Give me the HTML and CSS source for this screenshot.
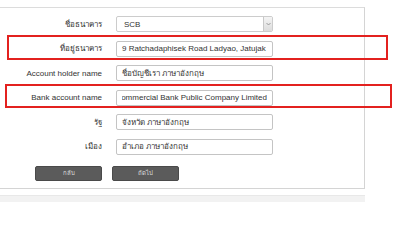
FILE: index.html
```html
<!DOCTYPE html>
<html lang="th">
<head>
<meta charset="utf-8">
<title>Bank form</title>
<link rel="stylesheet" href="styles.css">
</head>
<body>
<div class="panel">
  <div class="form">
    <div class="row">
      <div class="label">ชื่อธนาคาร</div>
      <div class="field select"><span class="val">SCB</span><span class="arrow"><svg width="5" height="4" viewBox="0 0 5 4"><path d="M0.5 1 L2.5 3 L4.5 1" fill="none" stroke="#888" stroke-width="0.8"/></svg></span></div>
    </div>
    <div class="row">
      <div class="label">ที่อยู่ธนาคาร</div>
      <div class="field"><span class="val">9 Ratchadaphisek Road Ladyao, Jatujak</span></div>
    </div>
    <div class="row">
      <div class="label">Account holder name</div>
      <div class="field"><span class="val">ชื่อบัญชีเรา ภาษาอังกฤษ</span></div>
    </div>
    <div class="row">
      <div class="label">Bank account name</div>
      <div class="field"><div class="clip"><span class="val">Commercial Bank Public Company Limited</span></div></div>
    </div>
    <div class="row">
      <div class="label">รัฐ</div>
      <div class="field"><span class="val">จังหวัด ภาษาอังกฤษ</span></div>
    </div>
    <div class="row">
      <div class="label">เมือง</div>
      <div class="field"><span class="val">อำเภอ ภาษาอังกฤษ</span></div>
    </div>
    <div class="buttons">
      <div class="btn">กลับ</div>
      <div class="btn">ถัดไป</div>
    </div>
  </div>
</div>
<div class="footer"></div>
<div class="mark mark1"></div>
<div class="mark mark2"></div>
</body>
</html>
```
FILE: styles.css
```css
html, body {
  margin: 0;
  padding: 0;
  background: #ffffff;
}
body {
  width: 400px;
  height: 202px;
  overflow: hidden;
  position: relative;
  font-family: "Liberation Sans", "Noto Sans", "DejaVu Sans", sans-serif;
  font-size: 8px;
  color: #333333;
}
.panel {
  margin-top: 7px;
  width: 364px;
  height: 180px;
  border-top: 1px solid #dcdcdc;
  border-right: 1px solid #d4d4d4;
  border-bottom: 1px solid #d4d4d4;
  background: #ffffff;
}
.form {
  padding-top: 8px;
  display: flex;
  flex-direction: column;
  gap: 8.6px;
}
.row {
  display: flex;
  align-items: center;
  height: 16px;
}
.label {
  width: 102px;
  text-align: right;
  padding-right: 14px;
  color: #333333;
  white-space: nowrap;
}
.field {
  box-sizing: border-box;
  width: 157px;
  height: 16px;
  border: 1px solid #c4c4c4;
  border-radius: 2px;
  padding: 0 5px;
  display: flex;
  align-items: center;
  background: #ffffff;
  white-space: nowrap;
  overflow: hidden;
}
.select {
  padding-right: 0;
  justify-content: space-between;
  border-color: #cccccc;
}
.select .val {
  padding-left: 2px;
}
.arrow {
  width: 8px;
  height: 14px;
  border-left: 1px solid #c8c8c8;
  background: linear-gradient(#f4f4f4, #dcdcdc);
  display: flex;
  align-items: center;
  justify-content: center;
}
.clip {
  flex: 1;
  overflow: hidden;
  display: flex;
  justify-content: flex-end;
}
.clip .val {
  flex-shrink: 0;
}
.buttons {
  display: flex;
  gap: 10px;
  padding-left: 35px;
  margin-top: 2px;
}
.btn {
  box-sizing: border-box;
  width: 67px;
  height: 15px;
  background: #5b5b5b;
  border: 1px solid #4a4a4a;
  border-radius: 2px;
  color: #dedede;
  font-size: 6px;
  display: flex;
  align-items: center;
  justify-content: center;
}
.footer {
  margin-top: 6px;
  width: 365px;
  height: 8px;
  background: #f2f2f2;
  border-top: 1px solid #e8e8e8;
}
.mark {
  position: absolute;
  box-sizing: border-box;
  border: 2px solid #e3211f;
}
.mark1 {
  left: 7px;
  top: 35px;
  width: 381px;
  height: 25px;
}
.mark2 {
  left: 5px;
  top: 84px;
  width: 387px;
  height: 24px;
}
```
